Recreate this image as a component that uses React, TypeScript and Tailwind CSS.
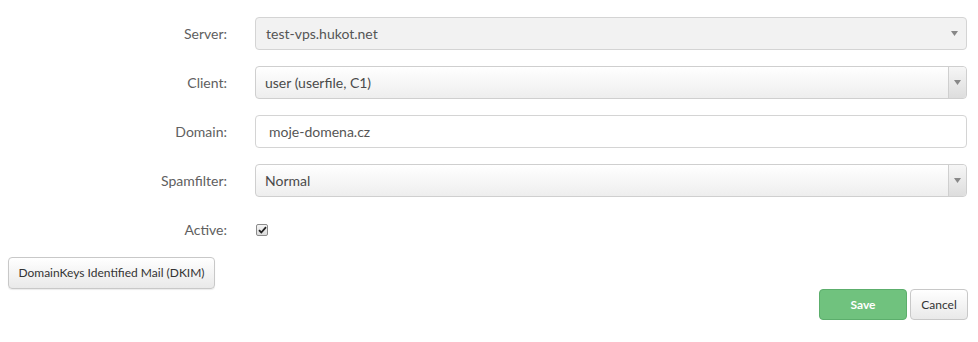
import React from "react";

const Arrow = () => (
  <svg width="7" height="5" viewBox="0 0 7 5" className="block">
    <path d="M0 0 L7 0 L3.5 5 Z" fill="#888" />
  </svg>
);

const Row = ({ label, children, h = "h-[33px]" }: { label: string; children: React.ReactNode; h?: string }) => (
  <div className={`flex items-center ${h}`}>
    <div className="w-[227px] shrink-0 text-right text-[14px] text-[#606060]">{label}</div>
    <div className="ml-[28px] w-[712px] h-full flex items-center">{children}</div>
  </div>
);

export default function App() {
  return (
    <div className="w-[978px] h-[342px] bg-white relative" style={{ fontFamily: "Lato, 'Open Sans', sans-serif" }}>
      <div className="pt-[17px] flex flex-col gap-[16px]">
        <Row label="Server:">
          <div className="w-full h-full rounded-[4px] border border-[#d4d4d4] bg-[#f2f2f2] flex items-center pl-[10px] pr-[8px] text-[14px] text-[#555]">
            <span className="flex-1">test-vps.hukot.net</span>
            <Arrow />
          </div>
        </Row>
        <Row label="Client:">
          <div className="w-full h-full rounded-[4px] border border-[#cfcfcf] bg-gradient-to-b from-white to-[#eeeeee] flex items-stretch text-[14px] text-[#4a4a4a]">
            <span className="flex-1 flex items-center pl-[9px]">user (userfile, C1)</span>
            <div className="w-[18px] border-l border-[#cfcfcf] flex items-center justify-center bg-gradient-to-b from-[#f6f6f6] to-[#dddddd] rounded-r-[4px]">
              <Arrow />
            </div>
          </div>
        </Row>
        <Row label="Domain:">
          <div className="w-full h-full rounded-[4px] border border-[#d4d4d4] bg-white flex items-center pl-[13px] text-[14px] text-[#555]">
            moje-domena.cz
          </div>
        </Row>
        <Row label="Spamfilter:">
          <div className="w-full h-full rounded-[4px] border border-[#cfcfcf] bg-gradient-to-b from-white to-[#eeeeee] flex items-stretch text-[14px] text-[#4a4a4a]">
            <span className="flex-1 flex items-center pl-[9px]">Normal</span>
            <div className="w-[18px] border-l border-[#cfcfcf] flex items-center justify-center bg-gradient-to-b from-[#f6f6f6] to-[#dddddd] rounded-r-[4px]">
              <Arrow />
            </div>
          </div>
        </Row>
        <Row label="Active:" h="h-[33px]">
          <div className="w-[12px] h-[12px] ml-[1px] rounded-[2px] border border-[#8a8a8a] bg-gradient-to-b from-[#f4f4f4] to-[#dcdcdc] flex items-center justify-center">
            <svg width="9" height="8" viewBox="0 0 9 8">
              <path d="M1 4.2 L3.3 6.5 L8 1.2" stroke="#222" strokeWidth="1.8" fill="none" />
            </svg>
          </div>
        </Row>
      </div>
      <div className="pl-[8px] mt-[11px]">
        <button className="h-[32px] w-[207px] rounded-[4px] border border-[#c8c8c8] bg-gradient-to-b from-white to-[#e9e9e9] text-[12px] text-[#333] shadow-[0_1px_1px_rgba(0,0,0,0.08)]">
          DomainKeys Identified Mail (DKIM)
        </button>
      </div>
      <div className="flex justify-end gap-[3px] pr-[10px] mt-0">
        <button className="h-[31px] w-[88px] rounded-[4px] border border-[#5cae6c] bg-[#70c27e] text-white font-bold text-[12px]">
          Save
        </button>
        <button className="h-[31px] w-[58px] rounded-[4px] border border-[#c8c8c8] bg-gradient-to-b from-white to-[#e9e9e9] text-[12px] text-[#333]">
          Cancel
        </button>
      </div>
    </div>
  );
}
